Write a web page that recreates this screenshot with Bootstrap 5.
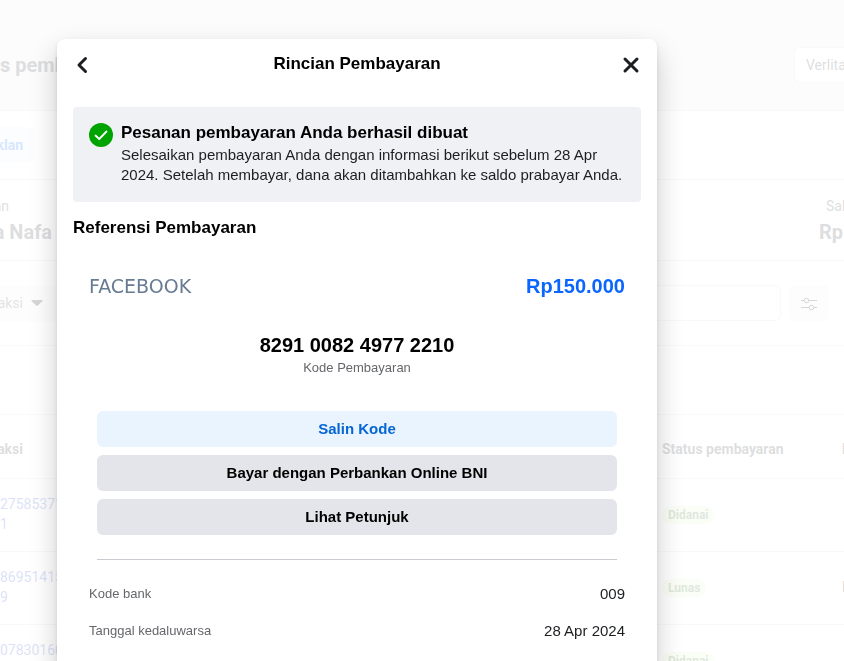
<!DOCTYPE html>
<html lang="id">
<head>
<meta charset="utf-8">
<meta name="viewport" content="width=device-width, initial-scale=1">
<title>Rincian Pembayaran</title>
<link href="https://cdn.jsdelivr.net/npm/bootstrap@5.3.0/dist/css/bootstrap.min.css" rel="stylesheet">
<style>
  body { font-family: Roboto, sans-serif; font-size: 14px; line-height: 20px; color: #1c1e21; background: #fff; }
  .billing-page { height: 100vh; white-space: nowrap; }
  .strip { border-bottom: 1px solid #dadde1; }
  .strip-head { height: 111px; padding-top: 20px; background: #ebebeb; }
  .strip-tabs { height: 69px; }
  .strip-account { height: 81px; padding-top: 3px; }
  .strip-filter { height: 85px; }
  .big-text { font-size: 20px; line-height: 32px; font-weight: 700; }
  .muted-text { color: #444950; }
  /* labels scrolled past the left edge keep their right end in view */
  .cut-start { display: flex; justify-content: flex-end; overflow: hidden; }
  .cut-8 { width: 9px; }
  .cut-24 { width: 23px; }
  .cut-52 { width: 52px; }
  .edge-col { width: 25px; }
  .edge-label { padding-left: 7px; }
  .account-pick { width: 50px; height: 36px; padding: 0 11px; background: #fff; border: 1px solid #dadde1; border-radius: 6px 0 0 6px; border-right: 0; color: #444950; }
  .tab-btn { height: 36px; padding: 0 11px 0 0; background: #e7f3ff; border: 0; border-radius: 0 6px 6px 0; color: #1877f2; font-weight: 700; }
  .filter-btn { height: 36px; background: #f0f0f0; border: 0; border-radius: 6px; }
  .type-btn { width: 80px; padding: 0; border-radius: 0; color: #606770; }
  .tune-btn { width: 40px; margin-right: 15px; }
  .search-box { height: 36px; border: 1px solid #dadde1; border-radius: 6px; }
  .tx-table { width: 1000px; table-layout: fixed; }
  .tx-table th, .tx-table td { padding: 0; border-bottom: 1px solid #dadde1; vertical-align: middle; }
  .tx-table th { height: 63px; padding-top: 5px; color: #444950; font-weight: 700; }
  .tx-table td { height: 73px; padding-bottom: 2px; }
  .col-id { width: 662px; }
  .col-status { width: 180px; }
  .tx-link { color: #385dd0; text-decoration: none; }
  .status-pill { display: inline-block; padding: 0 6px; height: 18px; line-height: 18px; border-radius: 9px; background: #e2f7ca; color: #4a7d45; font-size: 12px; font-weight: 700; }
  .veil { position: fixed; inset: 0; background: rgba(255,255,255,.82); }

  .pay-modal { font-family: "Liberation Sans", Arial, sans-serif; color: #000; }
  .pay-dialog { max-width: 600px; margin: 39px 0 0 57px; }
  .pay-panel { border: 0; border-radius: 8px 8px 0 0; min-height: calc(100vh - 39px); box-shadow: 0 12px 28px rgba(0,0,0,.2), 0 2px 4px rgba(0,0,0,.1); }
  .pay-top { padding: 12px 13px; height: 52px; }
  .icon-btn { width: 24px; height: 28px; padding: 0; border: 0; background: none; }
  .icon-btn svg { display: block; margin: 0 auto; }
  .pay-heading { font-size: 17px; line-height: 24px; font-weight: 700; margin: 0; }
  .top-title { line-height: 26px; }
  .pay-body { padding: 16px; }
  .notice { background: #f0f1f5; border-radius: 4px; padding: 16px 16px 17px; }
  .notice-text { font-size: 15px; line-height: 20px; color: #1c1e21; }
  .notice-title { line-height: 20px; margin-bottom: 2px; }
  .ref-title { margin-top: 14px; }
  .pay-card { padding: 0 16px; }
  .pay-block { padding-top: 34px; }
  .pay-actions { padding-top: 33px; }
  .brand-word { font-family: "DejaVu Sans", sans-serif; font-size: 19px; line-height: 24px; color: #677b93; }
  .amount { font-size: 20px; line-height: 24px; font-weight: 700; color: #0a66ff; }
  .pay-code { font-size: 20px; line-height: 26px; font-weight: 700; }
  .small-label { font-size: 13px; line-height: 20px; color: #65676b; }
  .pay-btn { height: 36px; padding: 0; border: 0; border-radius: 6px; font-size: 15px; font-weight: 700; background: #e4e5ea; color: #000; }
  .pay-btn-primary { background: #e9f4ff; color: #0566d4; }
  .pay-rule { margin: 24px 8px; border-top: 1px solid #c9cbd0; opacity: 1; }
  .pay-value { font-size: 15px; line-height: 20px; color: #1c1e21; }
  .detail { margin-bottom: 17px; }
</style>
<script src="https://cdn.jsdelivr.net/npm/bootstrap@5.3.0/dist/js/bootstrap.bundle.min.js"></script>
</head>
<body class="overflow-hidden">

<div class="billing-page overflow-hidden" aria-hidden="true">
  <header class="strip strip-head d-flex align-items-center justify-content-between">
    <div class="big-text muted-text">s pemb</div>
    <button class="account-pick text-start" type="button">Verlita</button>
  </header>
  <nav class="strip strip-tabs d-flex align-items-center">
    <button class="tab-btn" type="button"><span class="cut-start cut-24">klan</span></button>
  </nav>
  <section class="strip strip-account d-flex align-items-center justify-content-between">
    <div>
      <div class="muted-text cut-start cut-8">an</div>
      <div class="big-text muted-text cut-start cut-52">a Nafa</div>
    </div>
    <div class="edge-col">
      <div class="muted-text edge-label">Sal</div>
      <div class="big-text muted-text">Rp</div>
    </div>
  </section>
  <section class="strip strip-filter d-flex align-items-center gap-2">
    <button class="filter-btn type-btn d-flex align-items-center" type="button"><span class="cut-start cut-24">aksi</span>
      <svg class="ms-2" width="12" height="8" viewBox="0 0 12 8"><path d="M1.2 1h9.6c.8 0 1 .7.5 1.200L6.800 6.600c-.5.500-1.100.500-1.600 0L.7 2.200C.2 1.700.4 1 1.200 1z" fill="#1c1e21"/></svg>
    </button>
    <input class="search-box flex-grow-1" type="search" aria-label="Cari transaksi">
    <button class="filter-btn tune-btn" type="button" aria-label="Filter">
      <svg width="16" height="14" viewBox="0 0 16 14" fill="none" stroke="#1c1e21"><path d="M0 3.500h3M8 3.500h8M0 10.500h8M13 10.500h3"/><circle cx="5.500" cy="3.500" r="2.300"/><circle cx="10.500" cy="10.500" r="2.300"/></svg>
    </button>
  </section>
  <div class="strip strip-tabs"></div>
  <table class="tx-table">
    <colgroup><col class="col-id"><col class="col-status"><col></colgroup>
    <thead><tr><th><span class="cut-start cut-24">aksi</span></th><th>Status pembayaran</th><th>M</th></tr></thead>
    <tbody>
      <tr><td><a class="tx-link" href="#">27585371<br>1</a></td><td><span class="status-pill">Didanai</span></td><td></td></tr>
      <tr><td><a class="tx-link" href="#">86951415<br>9</a></td><td><span class="status-pill">Lunas</span></td><td>M</td></tr>
      <tr><td><a class="tx-link" href="#">07830160<br>0</a></td><td><span class="status-pill">Didanai</span></td><td></td></tr>
    </tbody>
  </table>
</div>
<div class="veil"></div>

<div class="modal d-block overflow-hidden pay-modal" role="dialog" aria-labelledby="payTitle">
  <div class="modal-dialog pay-dialog">
    <div class="modal-content pay-panel">
      <div class="pay-top d-flex justify-content-between">
        <button class="icon-btn" type="button" aria-label="Kembali">
          <svg width="16" height="28" viewBox="0 0 16 28" fill="none" stroke="#1c1e21" stroke-width="3" stroke-linecap="round" stroke-linejoin="round"><path d="M11.500 7.500L5 14l6.500 6.500"/></svg>
        </button>
        <h1 class="pay-heading top-title" id="payTitle">Rincian Pembayaran</h1>
        <button class="icon-btn" type="button" aria-label="Tutup">
          <svg width="20" height="28" viewBox="0 0 20 28" fill="none" stroke="#1c1e21" stroke-width="3" stroke-linecap="round"><path d="M3 8l12 12M15 8L3 20"/></svg>
        </button>
      </div>
      <div class="pay-body">
        <div class="notice d-flex gap-2">
          <svg class="flex-shrink-0" width="24" height="24" viewBox="0 0 24 24"><circle cx="12" cy="12" r="12" fill="#00a400"/><path d="M6.500 12.500l3.700 3.500 7.300-7.500" fill="none" stroke="#fff" stroke-width="1.800" stroke-linecap="round" stroke-linejoin="round"/></svg>
          <div>
            <h2 class="pay-heading notice-title">Pesanan pembayaran Anda berhasil dibuat</h2>
            <p class="notice-text mb-0">Selesaikan pembayaran Anda dengan informasi berikut sebelum 28 Apr 2024. Setelah membayar, dana akan ditambahkan ke saldo prabayar Anda.</p>
          </div>
        </div>
        <h2 class="pay-heading ref-title">Referensi Pembayaran</h2>
        <div class="pay-card">
          <div class="pay-block d-flex justify-content-between align-items-center">
            <span class="brand-word">FACEBOOK</span>
            <span class="amount">Rp150.000</span>
          </div>
          <div class="pay-block text-center">
            <div class="pay-code">8291 0082 4977 2210</div>
            <div class="small-label">Kode Pembayaran</div>
          </div>
          <div class="pay-actions d-grid gap-2 px-2">
            <button class="btn pay-btn pay-btn-primary" type="button">Salin Kode</button>
            <button class="btn pay-btn" type="button">Bayar dengan Perbankan Online BNI</button>
            <button class="btn pay-btn" type="button">Lihat Petunjuk</button>
          </div>
          <hr class="pay-rule">
          <div class="detail d-flex justify-content-between"><span class="small-label">Kode bank</span><span class="pay-value">009</span></div>
          <div class="detail d-flex justify-content-between"><span class="small-label">Tanggal kedaluwarsa</span><span class="pay-value">28 Apr 2024</span></div>
        </div>
      </div>
    </div>
  </div>
</div>
</body>
</html>
